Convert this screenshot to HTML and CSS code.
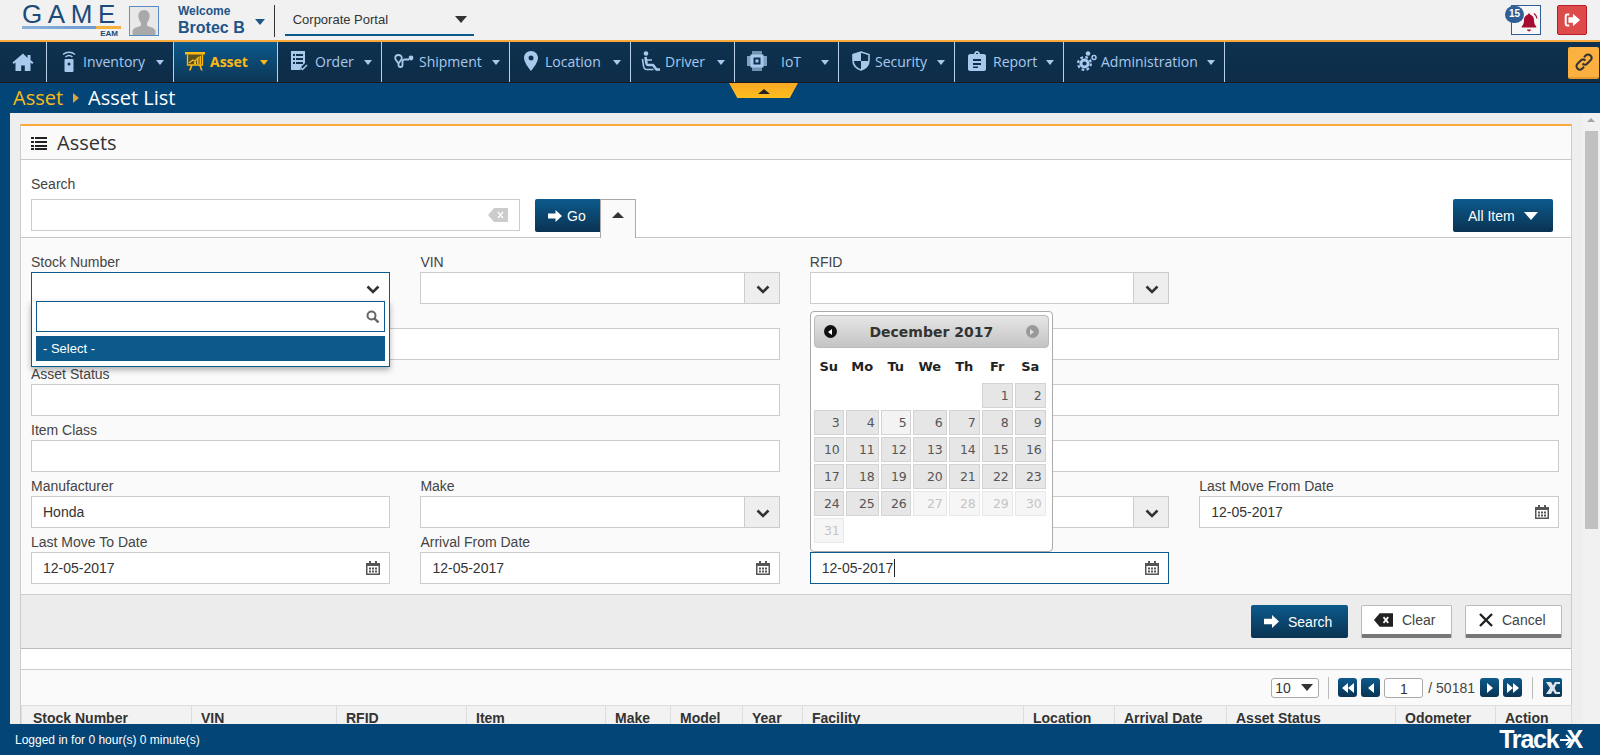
FILE: index.html
```html
<!DOCTYPE html>
<html lang="en">
<head>
  <meta charset="UTF-8">
  <meta name="viewport" content="width=device-width, initial-scale=1.0">
  <title>Asset List</title>
  <link rel="stylesheet" href="styles.css">
</head>
<body>
  <header class="topbar">
    <div class="logo">
      <div class="logo-word">GAME</div>
      <div class="logo-rule"></div>
      <div class="logo-sub">EAM</div>
    </div>
    <div class="avatar">
      <svg viewBox="0 0 28 28" width="28" height="28"><path fill="#a9a9a9" d="M14 3c-4 0-6 3-5.500 7 .3 2.500 1.500 5 2.500 6v2.500c-2 1.500-8 2-8.500 5.500v4h23v-4c-.5-3.500-6.500-4-8.500-5.500V16c1-1 2.200-3.500 2.500-6 .5-4-1.500-7-5.500-7z"/></svg>
    </div>
    <div class="welcome">
      <div class="welcome-hi">Welcome</div>
      <div class="welcome-name">Brotec B</div>
    </div>
    <span class="caret caret-blue"></span>
    <div class="top-divider"></div>
    <div class="portal">
      <span>Corporate Portal</span>
      <span class="caret caret-dark"></span>
    </div>
    <div class="top-right">
      <div class="bell-box">
        <span class="bell-badge">15</span>
        <svg viewBox="0 0 20 20" width="20" height="20"><path fill="#a50e30" d="M10 1.500c-.8 0-1.300.6-1.300 1.300-2.500.6-3.700 2.700-3.700 5.200 0 3.500-.8 5-2.300 6.500v1h14.600v-1C15.800 13 15 11.500 15 8c0-2.500-1.200-4.600-3.700-5.200 0-.7-.5-1.300-1.300-1.300zM8 17.500c0 1 .9 1.800 2 1.800s2-.8 2-1.800z"/><path fill="none" stroke="#a50e30" stroke-width="1.300" d="M15 1.500c1.800 1.200 2.800 3 3 5"/></svg>
      </div>
      <div class="logout-btn">
        <svg viewBox="0 0 20 20" width="18" height="18"><path fill="none" stroke="#fff" stroke-width="2.200" d="M7 4H4.500C3.500 4 3 4.500 3 5.500v9c0 1 .5 1.500 1.500 1.500H7"/><path fill="#fff" d="M11 3l8 7-8 7v-4H6V7h5z"/></svg>
      </div>
    </div>
  </header>

  <nav class="mainnav">
    <a class="nav-item nav-home">
      <svg viewBox="0 0 22 20" width="22" height="20"><path fill="currentColor" d="M11 1.500L.5 10.500l1.300 1.500L3.500 10.600V19h5.700v-5.500h3.600V19h5.700v-8.400l1.700 1.400 1.300-1.500-3-2.600V3h-3v2.900z"/></svg>
    </a>
    <a class="nav-item nav-inventory">
      <svg class="nav-ico" viewBox="0 0 14 24" width="14" height="24"><path fill="none" stroke="currentColor" stroke-width="1.500" d="M1 5.500c3.400-3 8.600-3 12 0M3.500 8c2-1.700 5-1.700 7 0"/><rect x="2.500" y="10" width="9" height="13" rx="1" fill="currentColor"/><circle cx="7" cy="15" r="1.500" fill="#0e3250"/></svg>
      <span>Inventory</span><span class="caret"></span>
    </a>
    <a class="nav-item nav-asset nav-active">
      <svg class="nav-ico" viewBox="0 0 20 20" width="20" height="20"><rect x="2" y="3" width="16" height="11" fill="#5a5320"/><rect x="0" y="1" width="20" height="2.500" fill="currentColor"/><path fill="none" stroke="currentColor" stroke-width="1.300" d="M2.500 3.500v10.500h15V3.500"/><path fill="currentColor" d="M4 19.500l2-5.500h1.700l-2 5.500zM14 14h1.700l2 5.500H16zM9 13v-2l2-1v3zM12 13V8l1.500-1v6zM14.500 13V5.500l1.500-1V13z"/><path fill="none" stroke="currentColor" stroke-width="1.200" d="M4 12l4-3 2 1 4-4"/></svg>
      <span>Asset</span><span class="caret"></span>
    </a>
    <a class="nav-item nav-order">
      <svg class="nav-ico" viewBox="0 0 18 20" width="18" height="20"><path fill="currentColor" d="M1 0h14v12l-5 5 1 2H1z"/><path fill="#0e3250" d="M3 3h2v2H3zM6 3h7v2H6zM3 7h2v2H3zM6 7h7v2H6zM3 11h2v2H3zM6 11h7v2H6z"/><path fill="none" stroke="currentColor" stroke-width="1.500" d="M10 16l2.500 2.500L17 14"/></svg>
      <span>Order</span><span class="caret"></span>
    </a>
    <a class="nav-item nav-shipment">
      <svg class="nav-ico" viewBox="0 0 20 14" width="20" height="14"><path fill="none" stroke="currentColor" stroke-width="1.800" d="M4.500 9v2c0 1.300.9 2 2 2s2-.7 2-2V7.500C8.500 6 9.500 5.500 10.500 5.500H15"/><path fill="none" stroke="currentColor" stroke-width="1.800" d="M4.500 1C2.500 1 1.200 2.200 1.200 4c0 1.500 2 3.800 3.300 5.300C5.800 7.800 7.800 5.500 7.800 4 7.800 2.200 6.500 1 4.500 1z"/><circle cx="17" cy="4" r="2.400" fill="currentColor"/></svg>
      <span>Shipment</span><span class="caret"></span>
    </a>
    <a class="nav-item nav-location">
      <svg class="nav-ico" viewBox="0 0 14 20" width="14" height="20"><path fill="currentColor" fill-rule="evenodd" d="M7 0C3 0 0 3 0 7c0 4 4.500 10 7 13 2.500-3 7-9 7-13 0-4-3-7-7-7zm0 4.500a2.500 2.500 0 110 5 2.500 2.500 0 010-5z"/></svg>
      <span>Location</span><span class="caret"></span>
    </a>
    <a class="nav-item nav-driver">
      <svg class="nav-ico" viewBox="0 0 20 20" width="20" height="20"><circle cx="5" cy="2.500" r="2.300" fill="currentColor"/><path fill="none" stroke="currentColor" stroke-width="2.600" d="M4.500 6l1 6.500c.2 1 .8 1.500 1.800 1.500H12l3.500 4.500H19"/><path fill="none" stroke="currentColor" stroke-width="1.600" d="M1.500 8l1 7c.3 2 1.500 3.500 3.500 3.500h6.500M6 9h5"/></svg>
      <span>Driver</span><span class="caret"></span>
    </a>
    <a class="nav-item nav-iot">
      <svg class="nav-ico" viewBox="0 0 20 20" width="20" height="20"><path fill="none" stroke="currentColor" stroke-width="1.300" d="M6 0v4M8 0v4M10 0v4M12 0v4M14 0v4M6 16v4M8 16v4M10 16v4M12 16v4M14 16v4M0 6h4M0 8h4M0 10h4M0 12h4M0 14h4M16 6h4M16 8h4M16 10h4M16 12h4M16 14h4"/><rect x="3.500" y="3.500" width="13" height="13" fill="currentColor"/><rect x="6.500" y="6.500" width="7" height="7" fill="#0e3250"/><rect x="8.500" y="8.500" width="3" height="3" fill="currentColor"/></svg>
      <span class="iot-label">IoT</span><span class="caret"></span>
    </a>
    <a class="nav-item nav-security">
      <svg class="nav-ico" viewBox="0 0 18 20" width="18" height="20"><path fill="none" stroke="currentColor" stroke-width="1.600" d="M9 1l8 2.500V9c0 5-3.500 8.500-8 10C4.500 17.500 1 14 1 9V3.500z"/><path fill="currentColor" d="M9 1v9H1V3.500zM9 10h8c0 5-3.500 7.500-8 9z"/></svg>
      <span>Security</span><span class="caret"></span>
    </a>
    <a class="nav-item nav-report">
      <svg class="nav-ico" viewBox="0 0 20 20" width="20" height="20"><path fill="currentColor" fill-rule="evenodd" d="M3 3h4c0-1.500 1.300-3 3-3s3 1.500 3 3h4c1 0 2 1 2 2v13c0 1-1 2-2 2H3c-1 0-2-1-2-2V5c0-1 1-2 2-2zm3 5v2h8V8zm0 4v2h8v-2zm0 3.500v1.500h5v-1.500zM9 3h2V2H9z"/></svg>
      <span>Report</span><span class="caret"></span>
    </a>
    <a class="nav-item nav-admin">
      <svg class="nav-ico" viewBox="0 0 20 20" width="20" height="20"><circle cx="7.500" cy="12.500" r="3.600" fill="none" stroke="currentColor" stroke-width="3"/><circle cx="7.500" cy="12.500" r="6.400" fill="none" stroke="currentColor" stroke-width="2.200" stroke-dasharray="2.700 2.330"/><circle cx="11" cy="2.500" r="2.300" fill="currentColor"/><circle cx="17" cy="6.500" r="2" fill="none" stroke="currentColor" stroke-width="1.500"/></svg>
      <span>Administration</span><span class="caret"></span>
    </a>
    <a class="link-btn">
      <svg viewBox="0 0 20 20" width="20" height="20"><path fill="none" stroke="#333" stroke-width="2" d="M8.500 11.500c1.500 1.500 3.500 1.300 4.800 0l3.200-3.200c1.400-1.400 1.400-3.400 0-4.800s-3.400-1.400-4.800 0L10 5.200M11.500 8.500c-1.500-1.500-3.500-1.300-4.800 0l-3.200 3.200c-1.400 1.400-1.400 3.400 0 4.800s3.400 1.400 4.800 0l1.700-1.700"/></svg>
    </a>
  </nav>

  <div class="crumbs">
    <span class="crumb-root">Asset</span>
    <span class="crumb-sep"></span>
    <span class="crumb-page">Asset List</span>
    <div class="collapse-tab"><span class="caret-up"></span></div>
  </div>

  <div class="workspace">
    <main class="content">
      <section class="panel">
        <div class="panel-head">
          <svg viewBox="0 0 16 14" width="16" height="14"><path fill="#222" d="M0 1h3v2H0zM4 1h12v2H4zM0 5h3v2H0zM4 5h12v2H4zM0 9h3v2H0zM4 9h12v2H4zM0 12h3v2H0zM4 12h12v2H4z"/></svg>
          <h1>Assets</h1>
        </div>

        <div class="search-row">
          <div class="search-col">
            <label class="field-label">Search</label>
            <div class="input search-input">
              <svg viewBox="0 0 20 14" width="20" height="14"><path fill="#ccc" d="M6 0h14v14H6L0 7z"/><path fill="none" stroke="#fff" stroke-width="1.300" d="M10 4l5 6M15 4l-5 6"/></svg>
            </div>
          </div>
          <button class="btn btn-dark btn-go">
            <svg class="arrow" viewBox="0 0 14 12" width="14" height="12"><path fill="#fff" d="M7.500 0L14 6l-6.500 6V8.500H0v-5h7.500z"/></svg>Go
          </button>
          <div class="toggle-tab"><span class="caret-up"></span></div>
          <button class="btn btn-dark btn-all">All Item<span class="caret caret-white"></span></button>
        </div>

        <form class="filters">
          <div class="field">
            <label class="field-label">Stock Number</label>
            <div class="input input-focus">
              <svg class="chevron" viewBox="0 0 14 9" width="14" height="9"><path fill="none" stroke="#333" stroke-width="2.600" d="M1.500 1.500L7 7l5.500-5.500"/></svg>
            </div>
            <div class="dropdown">
              <div class="dropdown-search">
                <svg viewBox="0 0 13 13" width="13" height="13"><circle cx="5.500" cy="5.500" r="4" fill="none" stroke="#666" stroke-width="2"/><path stroke="#666" stroke-width="2.400" d="M8.500 8.500l4 4"/></svg>
              </div>
              <div class="dropdown-item">- Select -</div>
            </div>
          </div>
          <div class="field">
            <label class="field-label">VIN</label>
            <div class="input input-select"><span class="select-btn"><svg class="chevron" viewBox="0 0 14 9" width="14" height="9"><path fill="none" stroke="#333" stroke-width="2.600" d="M1.500 1.500L7 7l5.500-5.500"/></svg></span></div>
          </div>
          <div class="field">
            <label class="field-label">RFID</label>
            <div class="input input-select"><span class="select-btn"><svg class="chevron" viewBox="0 0 14 9" width="14" height="9"><path fill="none" stroke="#333" stroke-width="2.600" d="M1.500 1.500L7 7l5.500-5.500"/></svg></span></div>
          </div>
          <div class="field"></div>

          <div class="field span-2">
            <label class="field-label"></label>
            <div class="input"></div>
          </div>
          <div class="field span-2">
            <label class="field-label"></label>
            <div class="input"></div>
          </div>
          <div class="field span-2">
            <label class="field-label">Asset Status</label>
            <div class="input"></div>
          </div>
          <div class="field span-2">
            <label class="field-label"></label>
            <div class="input"></div>
          </div>
          <div class="field span-2">
            <label class="field-label">Item Class</label>
            <div class="input"></div>
          </div>
          <div class="field span-2">
            <label class="field-label"></label>
            <div class="input"></div>
          </div>

          <div class="field">
            <label class="field-label">Manufacturer</label>
            <div class="input">Honda</div>
          </div>
          <div class="field">
            <label class="field-label">Make</label>
            <div class="input input-select"><span class="select-btn"><svg class="chevron" viewBox="0 0 14 9" width="14" height="9"><path fill="none" stroke="#333" stroke-width="2.600" d="M1.500 1.500L7 7l5.500-5.500"/></svg></span></div>
          </div>
          <div class="field">
            <label class="field-label"></label>
            <div class="input input-select"><span class="select-btn"><svg class="chevron" viewBox="0 0 14 9" width="14" height="9"><path fill="none" stroke="#333" stroke-width="2.600" d="M1.500 1.500L7 7l5.500-5.500"/></svg></span></div>
          </div>
          <div class="field">
            <label class="field-label">Last Move From Date</label>
            <div class="input input-date">12-05-2017<svg class="cal-ico" viewBox="0 0 14 14" width="14" height="14"><path fill="#555" fill-rule="evenodd" d="M3 0h2v2h4V0h2v2h3v12H0V2h3zM1.500 5v7.500h11V5zM3 6.500h2v2H3zM6 6.500h2v2H6zM9 6.500h2v2H9zM3 9.500h2v2H3zM6 9.500h2v2H6zM9 9.500h2v2H9z"/></svg></div>
          </div>

          <div class="field">
            <label class="field-label">Last Move To Date</label>
            <div class="input input-date">12-05-2017<svg class="cal-ico" viewBox="0 0 14 14" width="14" height="14"><path fill="#555" fill-rule="evenodd" d="M3 0h2v2h4V0h2v2h3v12H0V2h3zM1.500 5v7.500h11V5zM3 6.500h2v2H3zM6 6.500h2v2H6zM9 6.500h2v2H9zM3 9.500h2v2H3zM6 9.500h2v2H6zM9 9.500h2v2H9z"/></svg></div>
          </div>
          <div class="field">
            <label class="field-label">Arrival From Date</label>
            <div class="input input-date">12-05-2017<svg class="cal-ico" viewBox="0 0 14 14" width="14" height="14"><path fill="#555" fill-rule="evenodd" d="M3 0h2v2h4V0h2v2h3v12H0V2h3zM1.500 5v7.500h11V5zM3 6.500h2v2H3zM6 6.500h2v2H6zM9 6.500h2v2H9zM3 9.500h2v2H3zM6 9.500h2v2H6zM9 9.500h2v2H9z"/></svg></div>
          </div>
          <div class="field">
            <label class="field-label"></label>
            <div class="input input-date input-focus"><span>12-05-2017</span><span class="text-cursor"></span><svg class="cal-ico" viewBox="0 0 14 14" width="14" height="14"><path fill="#555" fill-rule="evenodd" d="M3 0h2v2h4V0h2v2h3v12H0V2h3zM1.500 5v7.500h11V5zM3 6.500h2v2H3zM6 6.500h2v2H6zM9 6.500h2v2H9zM3 9.500h2v2H3zM6 9.500h2v2H6zM9 9.500h2v2H9z"/></svg></div>
            <div class="calendar">
              <div class="cal-head">
                <span class="cal-nav"><span class="cal-nav-left"></span></span>
                <span class="cal-title">December 2017</span>
                <span class="cal-nav cal-nav-off"><span class="cal-nav-right"></span></span>
              </div>
              <div class="cal-grid">
                <b>Su</b><b>Mo</b><b>Tu</b><b>We</b><b>Th</b><b>Fr</b><b>Sa</b>
                <i></i><i></i><i></i><i></i><i></i><span>1</span><span>2</span>
                <span>3</span><span>4</span><span class="today">5</span><span>6</span><span>7</span><span>8</span><span>9</span>
                <span>10</span><span>11</span><span>12</span><span>13</span><span>14</span><span>15</span><span>16</span>
                <span>17</span><span>18</span><span>19</span><span>20</span><span>21</span><span>22</span><span>23</span>
                <span>24</span><span>25</span><span>26</span><span class="off">27</span><span class="off">28</span><span class="off">29</span><span class="off">30</span>
                <span class="off">31</span>
              </div>
            </div>
          </div>
        </form>

        <div class="actions">
          <button class="btn btn-dark btn-search">
            <svg viewBox="0 0 14 12" width="15" height="13"><path fill="#fff" d="M7.500 0L14 6l-6.500 6V8.500H0v-5h7.500z"/></svg>Search
          </button>
          <button class="btn btn-light btn-clear">
            <svg viewBox="0 0 20 14" width="19" height="14"><path fill="#222" d="M6 0h14v14H6L0 7z"/><path fill="none" stroke="#fff" stroke-width="1.800" d="M10 4l5 6M15 4l-5 6"/></svg>Clear
          </button>
          <button class="btn btn-light btn-cancel">
            <svg viewBox="0 0 14 14" width="14" height="14"><path fill="none" stroke="#222" stroke-width="2.400" d="M1 1l12 12M13 1L1 13"/></svg>Cancel
          </button>
        </div>

        <div class="gap-strip"></div>

        <div class="pager">
          <div class="page-size">10<span class="caret caret-dark"></span></div>
          <span class="pager-sep"></span>
          <button class="pg-btn"><span class="tri-left"></span><span class="tri-left"></span></button>
          <button class="pg-btn"><span class="tri-left"></span></button>
          <div class="page-input">1</div>
          <span class="page-total">/ 50181</span>
          <button class="pg-btn"><span class="tri-right"></span></button>
          <button class="pg-btn"><span class="tri-right"></span><span class="tri-right"></span></button>
          <span class="pager-sep pager-sep-last"></span>
          <button class="pg-btn pg-excel">
            <svg viewBox="0 0 14 12" width="14" height="12"><path fill="#dfe6ec" d="M0 0h5l2 3.500L9 0h5v2h-3.500L8.500 6l2 4H14v2H9L7 8.500 5 12H0l4-6z"/></svg>
          </button>
        </div>

        <table class="grid">
          <thead>
            <tr>
              <th class="c-stock">Stock Number</th>
              <th class="c-vin">VIN</th>
              <th class="c-rfid">RFID</th>
              <th class="c-item">Item</th>
              <th class="c-make">Make</th>
              <th class="c-model">Model</th>
              <th class="c-year">Year</th>
              <th class="c-facility">Facility</th>
              <th class="c-location">Location</th>
              <th class="c-arrival">Arrival Date</th>
              <th class="c-status">Asset Status</th>
              <th class="c-odo">Odometer</th>
              <th class="c-action">Action</th>
            </tr>
          </thead>
        </table>
      </section>
    </main>
    <div class="scrollbar">
      <span class="scroll-up"></span>
      <div class="scroll-thumb"></div>
    </div>
  </div>

  <footer class="footer">
    <span>Logged in for 0 hour(s) 0 minute(s)</span>
    <div class="brand">Track<svg viewBox="0 0 12 12" width="12" height="12"><path fill="none" stroke="#fff" stroke-width="1.800" d="M0 6h11M6 1l5 5-5 5"/></svg><span class="brand-x">X</span></div>
  </footer>
</body>
</html>
```

FILE: styles.css
```css
* {
  box-sizing: border-box;
}

html, body {
  margin: 0;
  height: 755px;
  overflow: hidden;
}

body {
  display: flex;
  flex-direction: column;
  font-family: "Liberation Sans", Arial, sans-serif;
  font-size: 14px;
  color: #333;
  background: #eee;
}

/* carets */
.caret {
  display: inline-block;
  width: 0;
  height: 0;
  border-left: 4.5px solid transparent;
  border-right: 4.5px solid transparent;
  border-top: 5px solid currentColor;
}

.caret-blue {
  color: #1f5488;
  border-left-width: 5px;
  border-right-width: 5px;
  border-top-width: 6px;
  margin-left: 10px;
}

.caret-dark {
  color: #333;
  border-left-width: 6px;
  border-right-width: 6px;
  border-top-width: 7px;
}

.caret-white {
  color: #fff;
  border-left-width: 7px;
  border-right-width: 7px;
  border-top-width: 8px;
  margin-left: 9px;
}

.caret-up {
  display: inline-block;
  width: 0;
  height: 0;
  border-left: 6px solid transparent;
  border-right: 6px solid transparent;
  border-bottom: 6px solid #333;
}

/* top bar */
.topbar {
  height: 42px;
  flex: none;
  display: flex;
  align-items: flex-start;
  background: #f1f1f1;
  border-bottom: 2px solid #fbab3c;
  padding-left: 22px;
}

.logo {
  width: 98px;
  height: 38px;
  padding-top: 3px;
  text-align: right;
}

.logo-word {
  font-size: 26px;
  line-height: 23px;
  letter-spacing: 5.6px;
  color: #1c4a7a;
  text-align: left;
  white-space: nowrap;
}

.logo-rule {
  height: 3px;
  margin-right: -1px;
  background: linear-gradient(90deg, #8ab2dc 0, #6d9ad0 75%, #f6b13f 75%, #f6b13f 100%);
}

.logo-sub {
  font-size: 8px;
  line-height: 8px;
  margin-top: 1px;
  padding-right: 2px;
  font-weight: bold;
  color: #1c4a7a;
}

.avatar {
  width: 30px;
  height: 30px;
  margin: 6px 0 0 9px;
  background: #e8e8e8;
  border: 1px solid #5b8bc5;
  border-left-color: #5da85d;
  overflow: hidden;
}

.welcome {
  margin: 5px 0 0 19px;
  color: #1f5488;
}

.welcome-hi {
  font-size: 12px;
  font-weight: bold;
  line-height: 12px;
}

.welcome-name {
  font-size: 16px;
  font-weight: bold;
  line-height: 22px;
}

.welcome + .caret {
  margin-top: 19px;
}

.top-divider {
  width: 1px;
  height: 32px;
  margin: 5px 0 0 9px;
  background: #333;
}

.portal {
  width: 189px;
  height: 32px;
  margin: 4px 0 0 10px;
  padding: 0 7px 0 8px;
  display: flex;
  align-items: center;
  justify-content: space-between;
  font-size: 13px;
  border-bottom: 2px solid #0c5a8c;
}

.top-right {
  margin-left: auto;
  display: flex;
  align-items: flex-start;
  gap: 16px;
  padding: 5px 13px 0 0;
}

.bell-box {
  position: relative;
  width: 30px;
  height: 30px;
  border: 1px solid #2f5f94;
  background: #f7f7f7;
  display: flex;
  align-items: center;
  justify-content: center;
  padding: 4px 0 0 6px;
}

.bell-badge {
  position: absolute;
  left: -7px;
  top: 0;
  width: 19px;
  height: 17px;
  border-radius: 9px;
  background: #2f5f94;
  color: #fff;
  font-size: 10px;
  font-weight: bold;
  line-height: 16px;
  text-align: center;
}

.logout-btn {
  width: 30px;
  height: 30px;
  border-radius: 2px;
  background: #dd4a4a;
  border: 1px solid #b81d2b;
  display: flex;
  align-items: center;
  justify-content: center;
}

/* main nav */
.mainnav {
  height: 41px;
  flex: none;
  display: flex;
  align-items: stretch;
  background: linear-gradient(180deg, #0e3250, #0d2c47);
  border-bottom: 1px solid #1a1a1a;
  font-family: "Open Sans", sans-serif;
  font-size: 14px;
  color: #a9c9ec;
}

.nav-item {
  display: flex;
  align-items: center;
  gap: 7px;
  padding: 0 9px 2px 12px;
  border-right: 1px solid #b8cfe8;
}

.nav-item .caret {
  margin-left: auto;
  margin-top: 2px;
}

.nav-ico {
  flex: none;
}

.nav-home {
  padding: 0 12px;
  width: 47px;
}

.nav-inventory { width: 127px; padding-left: 15px; }
.nav-asset { width: 104px; padding-left: 11px; gap: 5px; }
.nav-order { width: 104px; padding-left: 12px; }
.nav-shipment { width: 128px; padding-left: 12px; gap: 5px; }
.nav-location { width: 121px; padding-left: 14px; }
.nav-driver { width: 104px; padding-left: 10px; gap: 4px; }
.nav-iot { width: 104px; padding-left: 12px; }
.nav-security { width: 116px; padding-left: 13px; gap: 5px; }
.nav-report { width: 109px; padding-left: 12px; gap: 6px; }
.nav-admin { width: 161px; padding-left: 13px; gap: 4px; }

.nav-active {
  color: #fdb913;
  font-weight: 700;
  background: linear-gradient(180deg, #0c5a8c, #0d3556);
}

.iot-label {
  margin-left: 7px;
}

.link-btn {
  margin: 5px 1px 3px auto;
  width: 31px;
  background: #fbb040;
  border-bottom: 2px solid #e59a2c;
  border-radius: 2px;
  display: flex;
  align-items: center;
  justify-content: center;
}

/* breadcrumb */
.crumbs {
  position: relative;
  height: 30px;
  flex: none;
  display: flex;
  align-items: center;
  padding: 0 0 2px 13px;
  background: #034577;
  font-family: "Open Sans", sans-serif;
  font-size: 20px;
  color: #fff;
}

.crumb-root {
  color: #fdb913;
}

.crumb-sep {
  width: 0;
  height: 0;
  margin: 2px 9px 0 10px;
  border-top: 5px solid transparent;
  border-bottom: 5px solid transparent;
  border-left: 6px solid #d9a441;
}

.collapse-tab {
  position: absolute;
  left: 729px;
  top: 0;
  width: 69px;
  height: 15px;
  background: linear-gradient(180deg, #f9a825, #fdbe1e);
  clip-path: polygon(0 0, 100% 0, 88% 100%, 12% 100%);
  text-align: center;
  line-height: 8px;
}

.collapse-tab .caret-up {
  border-left-width: 6px;
  border-right-width: 6px;
  border-bottom-width: 5px;
  border-bottom-color: #222;
}

/* workspace */
.workspace {
  flex: 1;
  min-height: 0;
  display: flex;
  background: #034577;
  padding-left: 10px;
}

.content {
  flex: 1;
  min-width: 0;
  background: #eee;
  padding: 11px 11px 0 10px;
  overflow: hidden;
}

.scrollbar {
  position: relative;
  width: 17px;
  flex: none;
  background: #f1f1f1;
  padding: 18px 2px 0;
}

.scroll-up {
  position: absolute;
  left: 4px;
  top: 5px;
  width: 0;
  height: 0;
  border-left: 4px solid transparent;
  border-right: 4px solid transparent;
  border-bottom: 4px solid #a3a3a3;
}

.scroll-thumb {
  height: 398px;
  background: #c1c1c1;
}

/* panel */
.panel {
  background: #fafafa;
  border-top: 2px solid #fbab3c;
  border-left: 1px solid #ccc;
  border-right: 1px solid #ccc;
}

.panel-head {
  height: 34px;
  display: flex;
  align-items: center;
  gap: 10px;
  padding-left: 10px;
  border-bottom: 1px solid #c8c8c8;
}

.panel-head h1 {
  margin: 0;
  font-family: "Open Sans", sans-serif;
  font-size: 20px;
  font-weight: 400;
  color: #333;
}

.field-label {
  display: block;
  height: 24px;
  line-height: 28px;
  font-size: 14px;
  color: #444;
  white-space: nowrap;
}

.input {
  position: relative;
  height: 32px;
  background: #fff;
  border: 1px solid #ccc;
  display: flex;
  align-items: center;
  padding-left: 11px;
  font-size: 14px;
  color: #333;
}

.search-row {
  height: 78px;
  background: #fff;
  border-bottom: 1px solid #c8c8c8;
  display: flex;
  align-items: flex-start;
  padding: 12px 18px 0 10px;
}

.search-col {
  width: 489px;
}

.search-col .field-label {
  height: 27px;
  line-height: 24px;
}

.search-input {
  justify-content: flex-end;
  padding-right: 11px;
}

.btn {
  display: inline-flex;
  align-items: center;
  font-family: "Liberation Sans", Arial, sans-serif;
  font-size: 14px;
  border-radius: 2px;
  cursor: pointer;
}

.btn-dark {
  color: #fff;
  border: 0;
  background: linear-gradient(180deg, #0c5a8c, #0a3352);
}

.btn-go {
  height: 33px;
  width: 65px;
  margin: 27px 0 0 15px;
  padding: 0 0 0 13px;
  gap: 5px;
  border-radius: 2px 0 0 2px;
}

.toggle-tab {
  width: 36px;
  height: 39px;
  margin-top: 27px;
  background: #fafafa;
  border: 1px solid #aaa;
  border-bottom: 0;
  text-align: center;
  line-height: 26px;
}

.btn-all {
  height: 33px;
  width: 100px;
  margin: 27px 0 0 auto;
  padding-left: 15px;
}

/* filter form */
.filters {
  display: grid;
  grid-template-columns: repeat(4, 359.4px);
  column-gap: 30px;
  grid-auto-rows: 56px;
  padding: 10px 0 10px 10px;
  position: relative;
}

.field {
  position: relative;
}

.span-2 {
  grid-column: span 2;
}

.input-focus {
  border-color: #0c5a8c;
}

.chevron {
  position: absolute;
  right: 9px;
  top: 12px;
}

.select-btn {
  position: absolute;
  right: 0;
  top: 0;
  bottom: 0;
  width: 35px;
  background: #eee;
  border-left: 1px solid #ccc;
}

.cal-ico {
  position: absolute;
  right: 9px;
  top: 8px;
}

.text-cursor {
  width: 1px;
  height: 18px;
  margin-left: 1px;
  background: #222;
}

.dropdown {
  position: absolute;
  left: 0;
  top: 53px;
  width: 100%;
  height: 66px;
  z-index: 5;
  padding: 0 4px;
  background: #fff;
  border: 1px solid #0c5a8c;
  border-top: 0;
  box-shadow: 0 3px 6px rgba(0, 0, 0, 0.3);
}

.dropdown-search {
  height: 31px;
  border: 1px solid #0c5a8c;
  background: #fff;
  display: flex;
  align-items: center;
  justify-content: flex-end;
  padding-right: 5px;
}

.dropdown-item {
  height: 25px;
  margin-top: 4px;
  padding-left: 7px;
  background: #0c5a8c;
  color: #fff;
  font-size: 13px;
  line-height: 25px;
}

.calendar {
  position: absolute;
  left: 0;
  bottom: 32px;
  width: 243px;
  height: 241px;
  z-index: 5;
  padding: 3px;
  background: #fff;
  border: 1px solid #aaa;
  border-radius: 4px;
  font-family: "DejaVu Sans", Verdana, sans-serif;
}

.cal-head {
  height: 33px;
  display: flex;
  align-items: center;
  justify-content: space-between;
  padding: 0 9px;
  background: linear-gradient(180deg, #e6e6e6, #c4c4c4);
  border: 1px solid #bbb;
  border-radius: 4px;
}

.cal-title {
  font-size: 14px;
  font-weight: bold;
  color: #333;
}

.cal-nav {
  width: 13px;
  height: 13px;
  border-radius: 50%;
  background: #111;
  display: flex;
  align-items: center;
  justify-content: center;
}

.cal-nav-off {
  background: #999;
}

.cal-nav-left {
  border-top: 3.5px solid transparent;
  border-bottom: 3.5px solid transparent;
  border-right: 4px solid #fff;
}

.cal-nav-right {
  border-top: 3.5px solid transparent;
  border-bottom: 3.5px solid transparent;
  border-left: 4px solid #ddd;
}

.cal-grid {
  display: grid;
  grid-template-columns: 30px 33px 30px 34px 31px 31px 31px;
  column-gap: 2px;
  row-gap: 2px;
  grid-template-rows: 33px;
  grid-auto-rows: 25px;
  margin-top: 0;
}

.cal-grid b {
  font-size: 13px;
  color: #222;
  text-align: center;
  line-height: 37px;
}

.cal-grid span {
  background: #e6e6e6;
  border: 1px solid #d3d3d3;
  color: #555;
  font-size: 12.5px;
  line-height: 23px;
  text-align: right;
  padding-right: 3px;
}

.cal-grid span.today {
  background: #f3f3f3;
}

.cal-grid span.off {
  background: #f6f6f6;
  border-color: #e8e8e8;
  color: #c4c4c4;
}

/* action bar */
.actions {
  height: 55px;
  background: #ececec;
  border-top: 1px solid #ccc;
  border-bottom: 1px solid #bbb;
  display: flex;
  align-items: flex-start;
  justify-content: flex-end;
  gap: 13px;
  padding: 10px 9px 0 0;
}

.actions .btn {
  height: 33px;
  gap: 9px;
}

.btn-search {
  width: 97px;
  padding-left: 13px;
}

.btn-light {
  background: #fff;
  color: #444;
  border: 1px solid #bbb;
  border-bottom: 4px solid #777;
}

.btn-clear {
  width: 91px;
  padding-left: 12px;
}

.btn-cancel {
  width: 97px;
  padding-left: 13px;
}

.gap-strip {
  height: 21px;
  background: #fff;
  border-bottom: 1px solid #ccc;
}

/* pager */
.pager {
  height: 35px;
  display: flex;
  align-items: center;
  justify-content: flex-end;
  gap: 4px;
  padding-right: 9px;
}

.page-size {
  width: 48px;
  height: 20px;
  display: flex;
  align-items: center;
  justify-content: space-between;
  padding: 0 5px 0 3px;
  background: #fff;
  border: 1px solid #aaa;
  border-radius: 3px;
  font-size: 14px;
}

.pager-sep {
  width: 1px;
  height: 22px;
  margin: 0 5px;
  background: #bbb;
}

.pager-sep-last {
  margin: 0 6px;
}

.pg-btn {
  width: 19px;
  height: 19px;
  padding: 0;
  border: 0;
  border-radius: 3px;
  background: linear-gradient(180deg, #0c5a8c, #0a3352);
  display: inline-flex;
  align-items: center;
  justify-content: center;
}

.tri-left {
  width: 0;
  height: 0;
  border-top: 5px solid transparent;
  border-bottom: 5px solid transparent;
  border-right: 6px solid #fff;
}

.tri-right {
  width: 0;
  height: 0;
  border-top: 5px solid transparent;
  border-bottom: 5px solid transparent;
  border-left: 6px solid #fff;
}

.page-input {
  width: 39px;
  height: 20px;
  background: #fff;
  border: 1px solid #aaa;
  border-radius: 3px;
  text-align: center;
  line-height: 20px;
}

.page-total {
  margin: 0 1px;
  white-space: nowrap;
  color: #444;
}

.pg-excel {
  border-radius: 2px;
}

/* results table */
.grid {
  width: 100%;
  table-layout: fixed;
  border-collapse: collapse;
  background: #f2f2f2;
}

.grid th {
  height: 30px;
  padding: 4px 0 0 9px;
  vertical-align: top;
  text-align: left;
  font-size: 14px;
  color: #333;
  border: 1px solid #ddd;
  white-space: nowrap;
}

.grid th.c-stock {
  padding-left: 11px;
}

.c-stock { width: 170px; }
.c-vin { width: 145px; }
.c-rfid { width: 130px; }
.c-item { width: 139px; }
.c-make { width: 65px; }
.c-model { width: 72px; }
.c-year { width: 60px; }
.c-facility { width: 221px; }
.c-location { width: 91px; }
.c-arrival { width: 112px; }
.c-status { width: 169px; }
.c-odo { width: 100px; }
.c-action { width: 76px; }

/* footer */
.footer {
  height: 31px;
  flex: none;
  display: flex;
  align-items: center;
  justify-content: space-between;
  padding: 0 18px 0 15px;
  background: #034577;
  color: #fff;
  font-size: 12px;
  position: relative;
}

.brand {
  display: flex;
  align-items: center;
  font-size: 25px;
  font-weight: bold;
  letter-spacing: -1.200px;
  color: #fff;
}

.brand svg {
  margin-right: -5px;
  margin-left: 1px;
}
```
